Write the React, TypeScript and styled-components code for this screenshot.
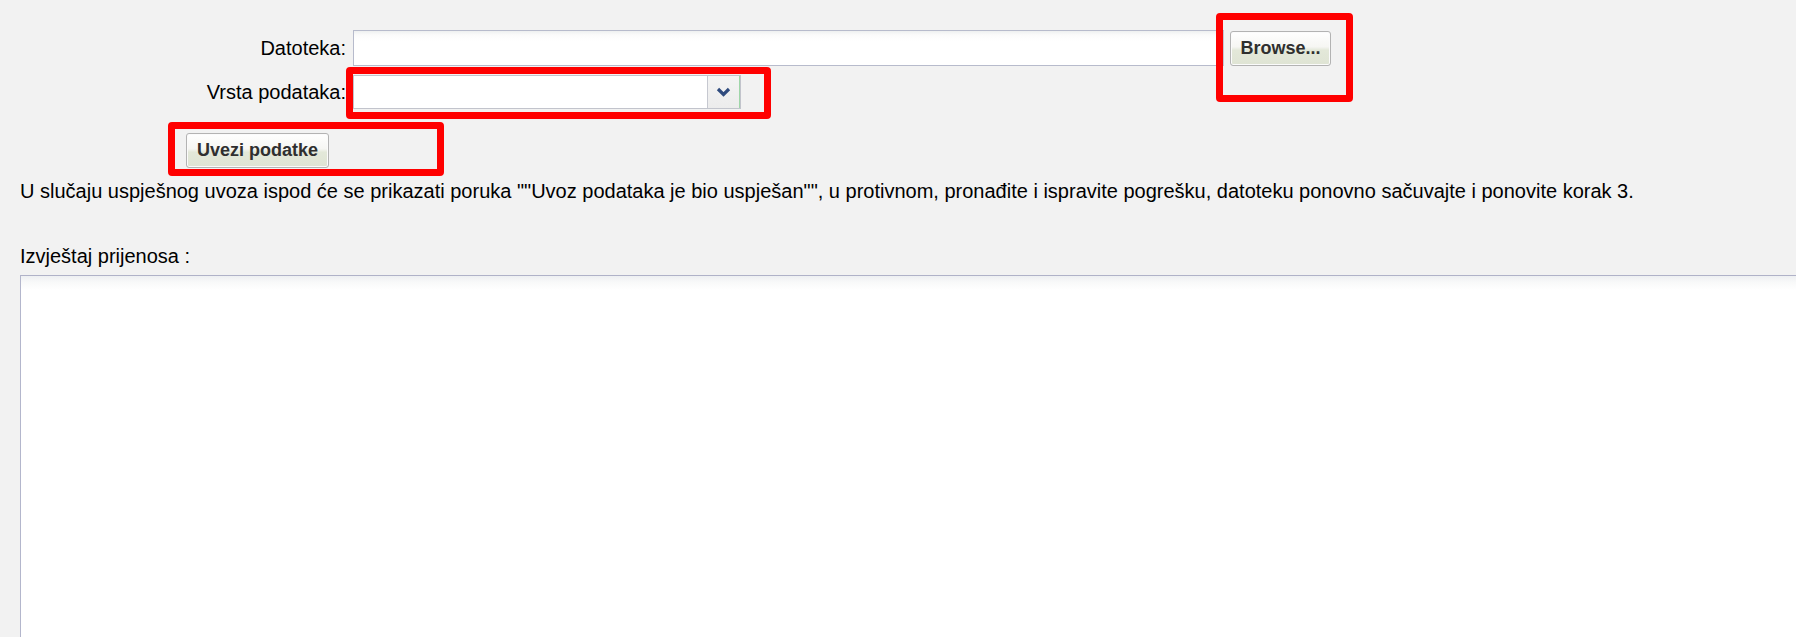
import React from "react";
import styled, { createGlobalStyle } from "styled-components";

const Global = createGlobalStyle`
  html, body {
    margin: 0;
    padding: 0;
    background: #f2f2f2;
    overflow: hidden;
  }
  body {
    font-family: "Liberation Sans", Arial, sans-serif;
    color: #000;
  }
`;

const Page = styled.div`
  height: 637px;
  overflow: hidden;
  padding: 30px 0 0 20px;
  box-sizing: border-box;
  display: flex;
  flex-direction: column;
`;

const Form = styled.div`
  display: grid;
  grid-template-columns: 325px auto;
  column-gap: 8px;
  row-gap: 9px;
  align-items: center;
`;

const Label = styled.label`
  font-size: 20px;
  text-align: right;
  justify-self: end;
  margin-right: -1px;
  white-space: nowrap;
`;

const Field = styled.div`
  display: flex;
  align-items: flex-start;
  gap: 6px;
`;

const Anchor = styled.div`
  position: relative;
  display: inline-flex;
`;

const Highlight = styled.div<{ $t: number; $r: number; $b: number; $l: number }>`
  position: absolute;
  top: ${(p) => -p.$t}px;
  left: ${(p) => -p.$l}px;
  right: ${(p) => -p.$r}px;
  bottom: ${(p) => -p.$b}px;
  border: 7px solid #ff0000;
  border-radius: 4px;
  pointer-events: none;
`;

const TextInput = styled.div`
  width: 871px;
  height: 36px;
  box-sizing: border-box;
  border: 1px solid #b7bbcc;
  border-right-color: #c4c7d4;
  background: linear-gradient(#eef0f0 0px, #fbfbfb 4px, #ffffff 10px);
`;

const Button = styled.button<{ $w: number }>`
  width: ${(p) => p.$w}px;
  height: 35px;
  box-sizing: border-box;
  border: 1px solid #b3b3b3;
  border-radius: 3px;
  background: linear-gradient(#ffffff 0%, #f6f6f3 45%, #e3e8d9 55%, #dfe4d4 100%);
  font-family: "Liberation Sans", Arial, sans-serif;
  font-weight: bold;
  font-size: 18px;
  color: #2f2f2f;
  padding: 0;
  margin: 0;
  display: flex;
  align-items: center;
  justify-content: center;
  box-shadow: inset 0 0 0 1px #fbfbfb;
`;

const Select = styled.div`
  width: 388px;
  height: 34px;
  box-sizing: border-box;
  border: 1px solid #c2c4cc;
  background: #fff;
  display: flex;
  justify-content: flex-end;
`;

const SelectArrow = styled.div`
  width: 33px;
  height: 100%;
  box-sizing: border-box;
  border-left: 1px solid #c6c8d0;
  border-right: 1px solid #9fd6a9;
  background: linear-gradient(#f4f4f4, #ececec);
  display: flex;
  align-items: center;
  justify-content: center;
`;

const ButtonRow = styled.div`
  grid-column: 1 / span 2;
  padding: 15px 0 0 166px;
`;

const Paragraph = styled.p`
  margin: 12px 0 0 0;
  font-size: 20px;
  line-height: 22px;
  white-space: nowrap;
`;

const ReportLabel = styled.div`
  margin-top: 43px;
  font-size: 20px;
  line-height: 22px;
`;

const Report = styled.div`
  margin-top: 8px;
  flex: 1 0 auto;
  margin-bottom: -10px;
  width: 1800px;
  box-sizing: border-box;
  border: 1px solid #b3b6cc;
  border-top-color: #b0b2c8;
  background: linear-gradient(#eef0f2 0px, #f8f9f9 6px, #ffffff 14px);
`;

const Chevron = () => (
  <svg width="15" height="10" viewBox="0 0 15 10">
    <path d="M2 2 L7.5 7.5 L13 2" fill="none" stroke="#2f4b7e" strokeWidth="3.2" strokeLinecap="butt" strokeLinejoin="miter" />
  </svg>
);

export default function App() {
  return (
    <>
      <Global />
      <Page>
        <Form>
          <Label>Datoteka:</Label>
          <Field>
            <TextInput />
            <Anchor style={{ marginTop: 1 }}>
              <Button $w={101}>Browse...</Button>
              <Highlight $t={18} $r={22} $b={36} $l={14} />
            </Anchor>
          </Field>
          <Label>Vrsta podataka:</Label>
          <Field>
            <Anchor>
              <Select>
                <SelectArrow>
                  <Chevron />
                </SelectArrow>
              </Select>
              <Highlight $t={8} $r={30} $b={10} $l={7} />
            </Anchor>
          </Field>
          <ButtonRow>
            <Anchor>
              <Button $w={143}>Uvezi podatke</Button>
              <Highlight $t={11} $r={115} $b={8} $l={18} />
            </Anchor>
          </ButtonRow>
        </Form>
        <Paragraph>
          U slučaju uspješnog uvoza ispod će se prikazati poruka ""Uvoz podataka je bio uspješan"", u protivnom, pronađite i ispravite pogrešku, datoteku ponovno sačuvajte i ponovite korak 3.
        </Paragraph>
        <ReportLabel>Izvještaj prijenosa :</ReportLabel>
        <Report />
      </Page>
    </>
  );
}
